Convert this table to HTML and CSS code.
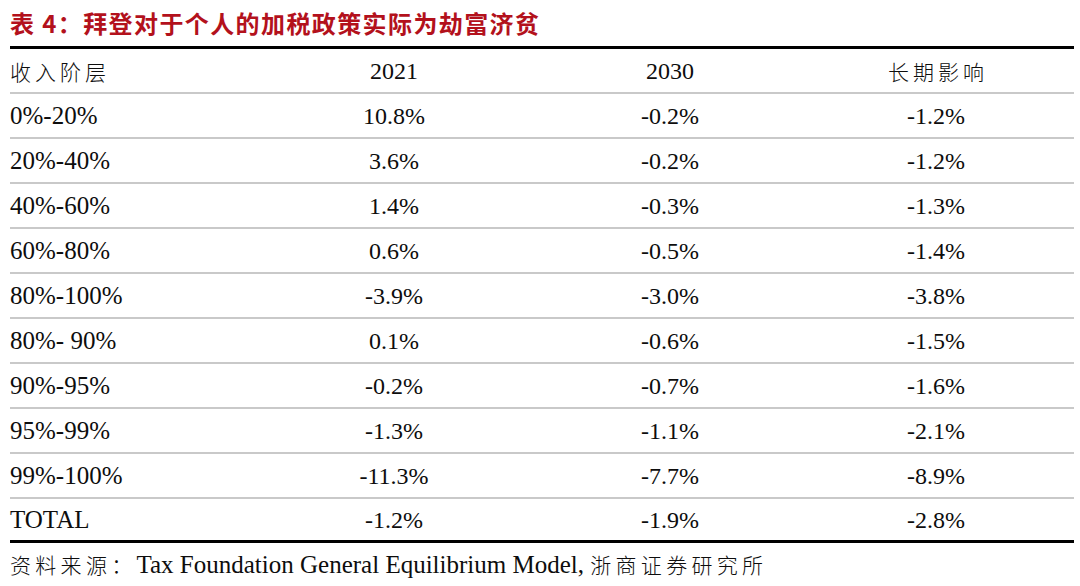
FILE: index.html
```html
<!DOCTYPE html>
<html lang="zh">
<head>
<meta charset="utf-8">
<link rel="stylesheet" href="styles.css">
</head>
<body>
<div class="page">
  <div class="title">表 4：拜登对于个人的加税政策实际为劫富济贫</div>
  <div class="grid-table">
    <div class="row head"><div class="c1 cjk">收入阶层</div><div class="c">2021</div><div class="c">2030</div><div class="c cjk">长期影响</div></div>
    <div class="row"><div class="c1">0%-20%</div><div class="c">10.8%</div><div class="c">-0.2%</div><div class="c">-1.2%</div></div>
    <div class="row"><div class="c1">20%-40%</div><div class="c">3.6%</div><div class="c">-0.2%</div><div class="c">-1.2%</div></div>
    <div class="row"><div class="c1">40%-60%</div><div class="c">1.4%</div><div class="c">-0.3%</div><div class="c">-1.3%</div></div>
    <div class="row"><div class="c1">60%-80%</div><div class="c">0.6%</div><div class="c">-0.5%</div><div class="c">-1.4%</div></div>
    <div class="row"><div class="c1">80%-100%</div><div class="c">-3.9%</div><div class="c">-3.0%</div><div class="c">-3.8%</div></div>
    <div class="row"><div class="c1">80%- 90%</div><div class="c">0.1%</div><div class="c">-0.6%</div><div class="c">-1.5%</div></div>
    <div class="row"><div class="c1">90%-95%</div><div class="c">-0.2%</div><div class="c">-0.7%</div><div class="c">-1.6%</div></div>
    <div class="row"><div class="c1">95%-99%</div><div class="c">-1.3%</div><div class="c">-1.1%</div><div class="c">-2.1%</div></div>
    <div class="row"><div class="c1">99%-100%</div><div class="c">-11.3%</div><div class="c">-7.7%</div><div class="c">-8.9%</div></div>
    <div class="row last"><div class="c1">TOTAL</div><div class="c">-1.2%</div><div class="c">-1.9%</div><div class="c">-2.8%</div></div>
  </div>
  <div class="source"><span class="cjk">资料来源：</span>Tax Foundation General Equilibrium Model, <span class="cjk">浙商证券研究所</span></div>
</div>
</body>
</html>
```

FILE: styles.css
```css
html, body {
  margin: 0;
  padding: 0;
  background: #ffffff;
}
.page {
  width: 1064px;
  padding: 8px 0 0 10px;
  font-family: "Liberation Serif", "Noto Sans CJK SC", serif;
  color: #0d0d0d;
}
.title {
  font-family: "Noto Sans CJK SC", sans-serif;
  font-weight: bold;
  font-size: 24px;
  letter-spacing: 1.4px;
  line-height: 30px;
  height: 30px;
  color: #b3111c;
  margin-bottom: 8px;
  white-space: nowrap;
}
.row {
  display: grid;
  grid-template-columns: 245px 278px 274px 258px;
  height: 43px;
  align-items: center;
  border-bottom: 2px solid #c9c9c9;
  font-size: 24px;
  line-height: 30px;
}
.row.head {
  border-top: 3px solid #000000;
}
.row.last {
  height: 41px;
  border-bottom: 3px solid #000000;
}
.c1 {
  text-align: left;
  white-space: pre;
  font-size: 25px;
}
.c {
  text-align: center;
}
.cjk {
  font-family: "Noto Sans CJK SC", sans-serif;
  font-weight: 300;
  font-size: 21px;
  letter-spacing: 4px;
}
.c.cjk {
  padding-left: 4px;
}
.source {
  margin-top: 6px;
  font-size: 25px;
  line-height: 30px;
  white-space: nowrap;
}
.source .cjk {
  letter-spacing: 4.3px;
}
```
